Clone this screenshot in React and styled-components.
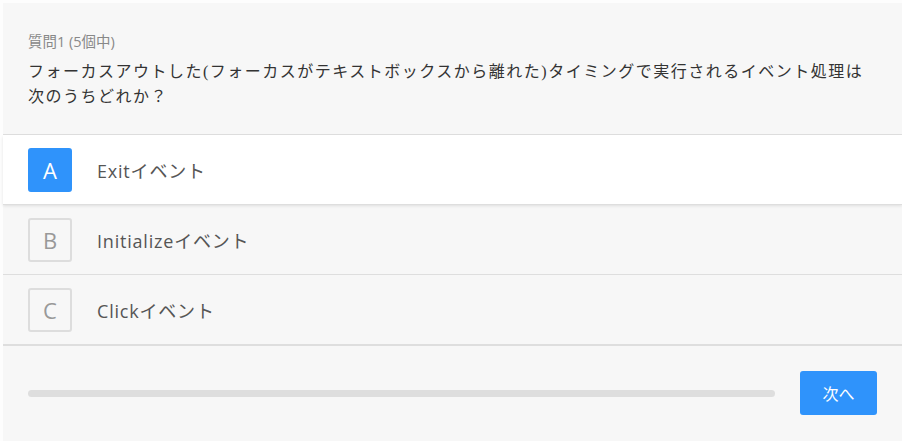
import styled, { createGlobalStyle } from "styled-components";

const GlobalStyle = createGlobalStyle`
  html, body {
    margin: 0;
    padding: 0;
    background: #fdfdfd;
  }
  body {
    font-family: "Open Sans", "Noto Sans CJK JP", sans-serif;
  }
`;

const options = [
  { key: "A", label: "Exitイベント", selected: true },
  { key: "B", label: "Initializeイベント" },
  { key: "C", label: "Clickイベント" },
];

const App = () => {
  return (
    <>
      <GlobalStyle />
      <Quiz>
        <Header>
          <Counter>質問1 (5個中)</Counter>
          <Question>
            フォーカスアウトした(フォーカスがテキストボックスから離れた)タイミングで実行されるイベント処理は次のうちどれか？
          </Question>
        </Header>
        <Options>
          {options.map((o) => (
            <Option key={o.key} $selected={o.selected}>
              <Letter $selected={o.selected}>{o.key}</Letter>
              <Label>{o.label}</Label>
            </Option>
          ))}
        </Options>
        <Footer>
          <Progress>
            <ProgressFill style={{ width: "0%" }} />
          </Progress>
          <NextButton>次へ</NextButton>
        </Footer>
      </Quiz>
    </>
  );
};

const Quiz = styled.div`
  margin: 3px 0 0 3px;
  background: #f7f7f7;
  min-height: 438px;
  display: flex;
  flex-direction: column;
`;

const Header = styled.div`
  padding: 30px 25px 25px;
  border-bottom: 1px solid #dedede;
`;

const Counter = styled.div`
  font-size: 14.5px;
  color: #888;
  line-height: 18px;
  margin-bottom: 8px;
`;

const Question = styled.p`
  margin: 0;
  font-family: "Liberation Serif", "Noto Sans CJK JP", serif;
  font-size: 16px;
  letter-spacing: 1.5px;
  line-height: 25px;
  color: #333;
`;

const Options = styled.div`
  display: flex;
  flex-direction: column;
  border-bottom: 2px solid #dedede;
`;

const Option = styled.div`
  display: flex;
  align-items: center;
  height: 69px;
  padding: 0 25px;
  background: ${({ $selected }) => ($selected ? "#fff" : "transparent")};
  box-shadow: ${({ $selected }) =>
    $selected ? "0 2px 3px rgba(0, 0, 0, 0.1)" : "none"};
  position: relative;
  & + & {
    border-top: 1px solid #dedede;
  }
`;

const Letter = styled.div`
  box-sizing: border-box;
  width: 44px;
  height: 44px;
  border-radius: 3px;
  display: flex;
  align-items: center;
  justify-content: center;
  font-size: 22px;
  font-weight: 400;
  color: ${({ $selected }) => ($selected ? "#fff" : "#999")};
  background: ${({ $selected }) => ($selected ? "#2f93fb" : "transparent")};
  border: 2px solid ${({ $selected }) => ($selected ? "#2f93fb" : "#dddddd")};
  margin-right: 25px;
`;

const Label = styled.span`
  font-size: 18px;
  letter-spacing: 0.8px;
  color: #555;
`;

const Footer = styled.div`
  display: flex;
  align-items: center;
  gap: 25px;
  padding: 25px;
`;

const Progress = styled.div`
  flex: 1;
  height: 7px;
  border-radius: 4px;
  background: #dedede;
  overflow: hidden;
`;

const ProgressFill = styled.div`
  height: 100%;
  background: #2f93fb;
`;

const NextButton = styled.button`
  width: 77px;
  height: 44px;
  border: none;
  border-radius: 3px;
  background: #2f93fb;
  color: #fff;
  font-family: "Noto Sans CJK JP", sans-serif;
  font-size: 16px;
  cursor: pointer;
`;

export default App;
